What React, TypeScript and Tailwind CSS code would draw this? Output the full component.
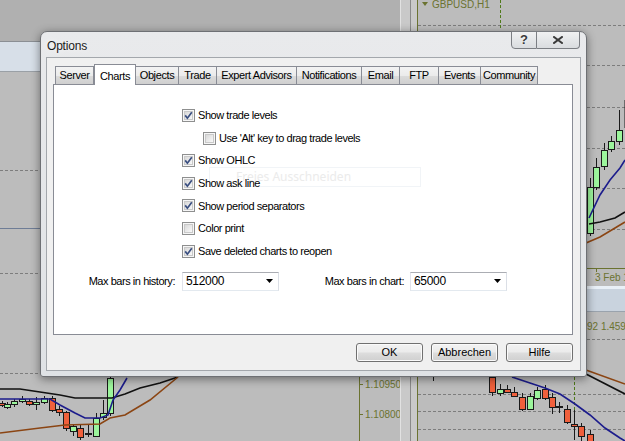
import React from 'react';

const tabs = [
  { label: 'Server', w: 38 },
  { label: 'Charts', w: 42 },
  { label: 'Objects', w: 43 },
  { label: 'Trade', w: 38 },
  { label: 'Expert Advisors', w: 80 },
  { label: 'Notifications', w: 65 },
  { label: 'Email', w: 38 },
  { label: 'FTP', w: 39 },
  { label: 'Events', w: 42 },
  { label: 'Community', w: 57 },
];

const options = [
  { label: 'Show trade levels', checked: true, indent: false },
  { label: "Use 'Alt' key to drag trade levels", checked: false, indent: true },
  { label: 'Show OHLC', checked: true, indent: false },
  { label: 'Show ask line', checked: true, indent: false },
  { label: 'Show period separators', checked: true, indent: false },
  { label: 'Color print', checked: false, indent: false },
  { label: 'Save deleted charts to reopen', checked: true, indent: false },
];

// x, body top, body bottom, wick top, wick bottom, up?
type Candle = [number, number, number, number, number, boolean];

const leftCandles: Candle[] = [
  [2, 403, 405, 401, 407, false],
  [7, 404, 407, 402, 409, true],
  [14, 401, 404, 399, 407, true],
  [22, 399, 401, 396, 403, true],
  [29, 401, 404, 399, 406, false],
  [36, 402, 404, 397, 410, true],
  [44, 398, 402, 396, 404, true],
  [52, 398, 410, 396, 412, false],
  [59, 409, 412, 406, 416, false],
  [66, 412, 428, 411, 431, false],
  [73, 426, 431, 424, 436, true],
  [80, 428, 437, 425, 440, false],
  [88, 433, 434, 425, 437, true],
  [96, 418, 436, 413, 437, true],
  [103, 413, 417, 400, 420, true],
  [110, 378, 413, 377, 416, true],
];

const rightCandles: Candle[] = [
  [492, 377, 392, 377, 396, false],
  [500, 389, 393, 384, 396, true],
  [507, 389, 392, 385, 393, false],
  [514, 392, 396, 387, 397, false],
  [522, 397, 409, 393, 411, false],
  [530, 396, 409, 393, 410, true],
  [537, 390, 398, 387, 400, true],
  [545, 389, 398, 385, 400, false],
  [552, 397, 407, 393, 414, false],
  [559, 406, 407, 402, 413, true],
  [567, 409, 422, 405, 424, false],
  [574, 424, 426, 410, 440, false],
  [581, 426, 436, 423, 441, false],
  [590, 434, 441, 430, 441, false],
];

const upperCandles: Candle[] = [
  [590, 187, 233, 178, 236, true],
  [596, 167, 187, 158, 190, true],
  [604, 150, 166, 143, 170, true],
  [611, 141, 149, 136, 152, true],
  [619, 130, 141, 110, 145, true],
];

function Candles({ items }: { items: Candle[] }) {
  return (
    <g>
      {items.map(([x, bt, bb, wt, wb, up], i) => (
        <g key={i}>
          <line x1={x + 0.5} y1={wt} x2={x + 0.5} y2={wb} stroke="#1a1a1a" />
          <rect x={x - 2.5} y={bt + 0.5} width={6} height={Math.max(bb - bt, 1)} fill={up ? '#9cf59c' : '#f0603c'} stroke="#1a1a1a" />
        </g>
      ))}
    </g>
  );
}

function Dashed({ x1, x2, y }: { x1: number; x2: number; y: number }) {
  return <line x1={x1} y1={y + 0.5} x2={x2} y2={y + 0.5} stroke="#7d7d7d" strokeDasharray="3 2" />;
}

function Backdrop() {
  return (
    <svg className="absolute inset-0" width="625" height="441" viewBox="0 0 625 441">
      <rect width="625" height="441" fill="#bcbcbc" />
      {/* top strip behind the dialog */}
      <rect x="0" y="0" width="410" height="41" fill="#b0b0b0" />
      <rect x="0" y="41" width="40" height="1" fill="#8b8f94" />
      <rect x="0" y="42" width="40" height="29" fill="#d7dfe8" />
      <rect x="0" y="71" width="40" height="1" fill="#9aa0a6" />
      {/* left chart */}
      <Dashed x1={0} x2={40} y={170} />
      <line x1="0" y1="228.5" x2="40" y2="228.5" stroke="#6f7d96" />
      <Dashed x1={0} x2={40} y={273} />
      <Dashed x1={0} x2={359} y={373} />
      <Candles items={leftCandles} />
      <polyline fill="none" stroke="#111" strokeWidth="1.6" points="0,389 20,389 40,392 60,395 75,398 112,398 125,394 140,388 160,383 178,377" />
      <polyline fill="none" stroke="#1c1c8c" strokeWidth="1.6" points="0,399 50,399 60,405 75,413 85,418 100,418 108,415 113,400 120,390 127,378" />
      <polyline fill="none" stroke="#8b4513" strokeWidth="1.6" points="0,433 40,428 65,425 100,424 110,418 125,415 150,400 178,377" />
      {/* price axis of left chart */}
      <line x1="359.5" y1="377" x2="359.5" y2="441" stroke="#6b7330" />
      <line x1="359" y1="384.5" x2="363" y2="384.5" stroke="#6b7330" />
      <line x1="359" y1="414.5" x2="363" y2="414.5" stroke="#6b7330" />
      <text x="365" y="388" fontSize="10" fill="#6b7330" fontFamily="Liberation Sans, Arial, sans-serif">1.10950</text>
      <text x="365" y="418" fontSize="10" fill="#6b7330" fontFamily="Liberation Sans, Arial, sans-serif">1.10800</text>
      {/* window border between charts */}
      <rect x="400" y="0" width="17" height="441" fill="#c9c9c9" />
      <line x1="400.5" y1="0" x2="400.5" y2="441" stroke="#e2e2e2" />
      <line x1="410.5" y1="0" x2="410.5" y2="441" stroke="#8a8a8a" />
      <rect x="417" y="0" width="208" height="441" fill="#bcbcbc" />
      <line x1="417.5" y1="0" x2="417.5" y2="441" stroke="#6b7330" />
      {/* right chart, top */}
      <path d="M422 2h6l-3 4z" fill="#6b7330" />
      <text x="432" y="8" fontSize="10" fill="#6b7330" fontFamily="Liberation Sans, Arial, sans-serif">GBPUSD,H1</text>
      <Dashed x1={418} x2={625} y={25} />
      <Dashed x1={587} x2={625} y={65} />
      <line x1="500.5" y1="0" x2="500.5" y2="30" stroke="#4f7a1a" strokeDasharray="3 2" />
      <Dashed x1={587} x2={625} y={107} />
      <Dashed x1={587} x2={625} y={148} />
      <Dashed x1={587} x2={625} y={188} />
      <Dashed x1={587} x2={625} y={229} />
      <Candles items={upperCandles} />
      <line x1="625" y1="100" x2="625" y2="128" stroke="#1a1a1a" />
      <polyline fill="none" stroke="#1c1c8c" strokeWidth="1.6" points="589,218 600,195 610,180 620,168 625,160" />
      <polyline fill="none" stroke="#111" strokeWidth="1.6" points="589,224 600,222 615,218 625,212" />
      <polyline fill="none" stroke="#8b4513" strokeWidth="1.6" points="586,243 600,237 615,228 625,222" />
      <line x1="587" y1="268.5" x2="625" y2="268.5" stroke="#6b7330" />
      <line x1="596.5" y1="268" x2="596.5" y2="272" stroke="#6b7330" />
      <text x="595" y="281" fontSize="10" fill="#6b7330" fontFamily="Liberation Sans, Arial, sans-serif">3 Feb 1</text>
      <rect x="587" y="286" width="38" height="3" fill="#e9f0f7" />
      <rect x="587" y="289" width="38" height="22" fill="#c9d3de" />
      <rect x="587" y="311" width="38" height="1" fill="#9aa3ad" />
      <text x="587" y="330" fontSize="10" fill="#6b7330" fontFamily="Liberation Sans, Arial, sans-serif">92 1.45965</text>
      <Dashed x1={587} x2={625} y={339} />
      {/* right chart, bottom */}
      <Dashed x1={418} x2={625} y={394} />
      <Dashed x1={418} x2={625} y={411} />
      <Dashed x1={418} x2={625} y={429} />
      <line x1="574.5" y1="377" x2="574.5" y2="441" stroke="#4f7a1a" strokeDasharray="3 2" />
      <line x1="433.5" y1="377" x2="433.5" y2="381" stroke="#1a1a1a" />
      <Candles items={rightCandles} />
      <polyline fill="none" stroke="#1c1c8c" strokeWidth="1.6" points="512,377 530,383 545,388 560,394 575,404 590,415 605,428 620,438 625,441" />
      <polyline fill="none" stroke="#8b4513" strokeWidth="1.6" points="586,370 625,384" />
      <polyline fill="none" stroke="#111" strokeWidth="1.6" points="586,374 625,394" />
    </svg>
  );
}

function CheckBox({ checked }: { checked: boolean }) {
  return (
    <svg width="13" height="13" viewBox="0 0 13 13" className="shrink-0">
      <defs>
        <linearGradient id="cbfill" x1="0" y1="0" x2="1" y2="1">
          <stop offset="0" stopColor="#d6d6d6" />
          <stop offset="1" stopColor="#fbfbfb" />
        </linearGradient>
      </defs>
      <rect x="0.5" y="0.5" width="12" height="12" fill="#f6f6f6" stroke="#8e8f8f" />
      <rect x="2.5" y="2.5" width="8" height="8" fill="url(#cbfill)" stroke="#c9c9c9" />
      {checked && <path d="M3.2 6.4 L5.4 9.2 L9.8 3.3" fill="none" stroke="#3a4f80" strokeWidth="1.7" />}
    </svg>
  );
}

function Combo({ value }: { value: string }) {
  return (
    <div className="flex items-center justify-between w-[97px] h-[19px] bg-white border border-[#abadb3] border-l-[#e2e3ea] border-r-[#dbdfe6] border-b-[#e3e9ef] pl-[3px] pr-[5px]">
      <span className="text-[12px] tracking-[-0.3px]">{value}</span>
      <svg width="7" height="4" viewBox="0 0 7 4">
        <path d="M0 0h7L3.5 4z" fill="#000" />
      </svg>
    </div>
  );
}

function DlgButton({ label }: { label: string }) {
  return (
    <button className="w-[67px] h-[19px] rounded-[3px] border border-[#707070] bg-[linear-gradient(#f2f2f2_0%,#ebebeb_48%,#dddddd_52%,#cfcfcf_100%)] shadow-[inset_0_0_0_1px_#fafafa] text-[11px] text-black leading-none">
      {label}
    </button>
  );
}

export default function App() {
  return (
    <div className="relative w-[625px] h-[441px] overflow-hidden font-['Liberation_Sans',Arial,sans-serif] text-black">
      <Backdrop />

      <div className="absolute left-[40px] top-[31px] w-[547px] h-[346px] rounded-t-[7px] rounded-b-[3px] border border-[#6e7074] bg-[linear-gradient(#e9eaec,#dfe2e5)] shadow-[0_2px_10px_rgba(0,0,0,0.45)] flex flex-col">
        {/* title bar */}
        <div className="h-[25px] flex justify-between shrink-0">
          <span className="pl-[6px] pt-[5px] text-[12px] tracking-[-0.2px] text-[#1b1b1b] [text-shadow:0_0_6px_#fff]">Options</span>
          <div className="flex mr-[6px] -mt-px self-start">
            <div className="w-[26px] h-[18px] flex items-center justify-center border border-[#7b7e83] rounded-bl-[4px] bg-[linear-gradient(#f0f1f2,#d9dcdf)] text-[13px] font-bold text-[#3a3a3a] [text-shadow:0_0_2px_#fff]">
              ?
            </div>
            <div className="w-[43px] h-[18px] flex items-center justify-center border border-l-0 border-[#7b7e83] rounded-br-[4px] bg-[linear-gradient(#f0f1f2,#d9dcdf)]">
              <svg width="10" height="8" viewBox="0 0 10 8">
                <path d="M1 1 L9 7 M9 1 L1 7" stroke="#3a3a3a" strokeWidth="2" strokeLinecap="square" />
              </svg>
            </div>
          </div>
        </div>

        {/* client area */}
        <div className="mx-[5px] h-[314px] bg-[#f0f0f0] border border-[#a3a7ac] pt-[6px] pl-[6px] pr-[7px] flex flex-col">
          <div className="flex items-end h-[20px] ml-[2px] relative z-10">
            {tabs.map((t) =>
              t.label === 'Charts' ? (
                <div
                  key={t.label}
                  className="h-[21px] -mb-px flex items-start justify-center pt-[3px] bg-white border border-b-0 border-[#898c95] text-[11px] tracking-[-0.4px]"
                  style={{ width: t.w }}
                >
                  {t.label}
                </div>
              ) : (
                <div
                  key={t.label}
                  className="h-[18px] flex items-center justify-center border border-b-0 border-[#898c95] -ml-px first:ml-0 bg-[linear-gradient(#f3f3f3,#ebebeb_50%,#dcdcdc_51%,#cfcfcf)] text-[11px] tracking-[-0.4px]"
                  style={{ width: t.w + 1 }}
                >
                  {t.label}
                </div>
              ),
            )}
          </div>

          <div className="relative h-[251px] bg-white border border-[#898c95] text-[11px] tracking-[-0.45px]">
            {/* faint ghost of a screen-clipping hint behind the dialog */}
            <div className="absolute left-[155px] top-[82px] w-[212px] h-[20px] border border-[#f1f4f7] flex items-center pl-[26px] font-['Noto_Sans',sans-serif] text-[12px] tracking-normal text-[#ebebeb]">
              Freies Ausschneiden
            </div>

            <div className="relative flex flex-col gap-[9.6px] pt-[24px] pl-[128px]">
              {options.map((o) => (
                <div key={o.label} className={`flex items-center gap-[2px] h-[13px] ${o.indent ? 'ml-[21px]' : ''}`}>
                  <CheckBox checked={o.checked} />
                  <span className="ml-[1px]">{o.label}</span>
                </div>
              ))}
            </div>

            <div className="relative flex items-center mt-[14px] whitespace-nowrap">
              <span className="w-[121px] text-right">Max bars in history:</span>
              <span className="ml-[7px]">
                <Combo value="512000" />
              </span>
              <span className="w-[125px] text-right">Max bars in chart:</span>
              <span className="ml-[6px]">
                <Combo value="65000" />
              </span>
            </div>
          </div>

          <div className="flex justify-end gap-[8px] mt-[8px]">
            <DlgButton label="OK" />
            <DlgButton label="Abbrechen" />
            <DlgButton label="Hilfe" />
          </div>
        </div>
      </div>
    </div>
  );
}
